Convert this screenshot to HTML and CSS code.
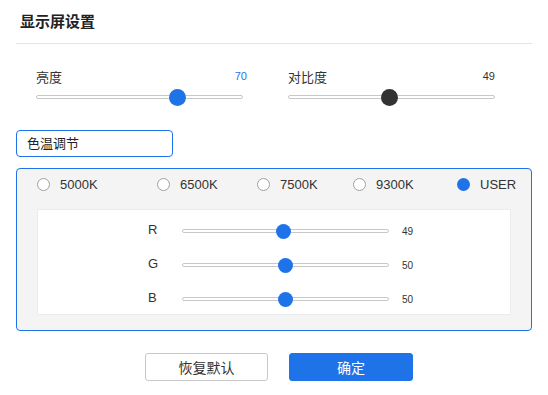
FILE: index.html
```html
<!DOCTYPE html>
<html lang="zh-CN">
<head>
    <meta charset="UTF-8">
    <meta name="viewport" content="width=device-width, initial-scale=1.0">
    <title>显示屏设置</title>
    <link rel="stylesheet" href="styles.css">
</head>
<body>
    <div class="page">
        <div class="header">
            <h1>显示屏设置</h1>
        </div>

        <div class="sliders">
            <div class="slider-block">
                <div class="slider-head">
                    <span>亮度</span>
                    <span class="slider-value slider-value-wide">70</span>
                </div>
                <input type="range" class="slider" min="0" max="100" value="70">
            </div>
            <div class="slider-block">
                <div class="slider-head">
                    <span>对比度</span>
                    <span class="slider-value slider-value-dark">49</span>
                </div>
                <input type="range" class="slider slider-dark" min="0" max="100" value="49">
            </div>
        </div>

        <div class="section-title">色温调节</div>

        <div class="panel">
            <div class="radios">
                <label class="radio"><span class="radio-dot"></span>5000K</label>
                <label class="radio"><span class="radio-dot"></span>6500K</label>
                <label class="radio"><span class="radio-dot"></span>7500K</label>
                <label class="radio"><span class="radio-dot"></span>9300K</label>
                <label class="radio"><span class="radio-dot checked"></span>USER</label>
            </div>
            <div class="rgb-box">
                <div class="rgb-row">
                    <span class="rgb-label">R</span>
                    <input type="range" class="slider slider-sm" min="0" max="100" value="49">
                    <span class="rgb-value">49</span>
                </div>
                <div class="rgb-row">
                    <span class="rgb-label">G</span>
                    <input type="range" class="slider slider-sm" min="0" max="100" value="50">
                    <span class="rgb-value">50</span>
                </div>
                <div class="rgb-row">
                    <span class="rgb-label">B</span>
                    <input type="range" class="slider slider-sm" min="0" max="100" value="50">
                    <span class="rgb-value">50</span>
                </div>
            </div>
        </div>

        <div class="actions">
            <button class="btn">恢复默认</button>
            <button class="btn btn-primary">确定</button>
        </div>
    </div>
</body>
</html>
```

FILE: styles.css
```css
body {
    margin: 0;
    font-family: "Liberation Sans", "Noto Sans CJK SC", sans-serif;
    color: #333;
    background-color: #fff;
}
.page {
    padding: 0 16px;
    width: 516px;
}
.header {
    height: 43px;
    border-bottom: 1px solid #e5e5e5;
}
h1 {
    margin: 0;
    padding: 1px 0 0 4px;
    font-size: 15px;
    line-height: 42px;
    font-weight: bold;
    color: #222;
}
.sliders {
    display: flex;
    gap: 45px;
    padding: 24px 0 0 20px;
}
.slider-block {
    width: 207px;
}
.slider-head {
    display: flex;
    justify-content: space-between;
    align-items: center;
    height: 16px;
    font-size: 13px;
}
.slider-value {
    font-size: 11px;
    color: #1e73e8;
}
.slider-value-wide {
    margin-right: -4px;
}
.slider-value-dark {
    color: #333;
}
.slider {
    -webkit-appearance: none;
    appearance: none;
    display: block;
    width: 207px;
    height: 17px;
    margin: 4px 0 0;
    background: transparent;
}
.slider::-webkit-slider-runnable-track {
    height: 4px;
    border: 1px solid #c8c8c8;
    border-radius: 3px;
    background: #fff;
}
.slider::-webkit-slider-thumb {
    -webkit-appearance: none;
    width: 17px;
    height: 17px;
    margin-top: -7px;
    border-radius: 50%;
    background: #1e73e8;
    border: none;
}
.slider-dark::-webkit-slider-thumb {
    background: #333;
}
.slider-sm {
    height: 15px;
    margin: 0;
}
.slider-sm::-webkit-slider-thumb {
    width: 15px;
    height: 15px;
    margin-top: -6px;
}
.section-title {
    margin-top: 25px;
    height: 25px;
    line-height: 25px;
    padding-left: 10px;
    width: 145px;
    border: 1px solid #1e73e8;
    border-radius: 4px;
    font-size: 13px;
    color: #222;
}
.panel {
    margin-top: 11px;
    padding: 7px 20px 15px;
    border: 1px solid #1e73e8;
    border-radius: 4px;
    background-color: #f4f4f4;
}
.radios {
    display: grid;
    grid-template-columns: 120px 100px 96px 104px auto;
    height: 16px;
    align-items: center;
}
.radio {
    display: flex;
    align-items: center;
    gap: 10px;
    font-size: 13px;
    color: #333;
}
.radio-dot {
    width: 11px;
    height: 11px;
    border: 1px solid #a0a0a0;
    border-radius: 50%;
    background: #fff;
}
.radio-dot.checked {
    width: 13px;
    height: 13px;
    border: none;
    background: #1e73e8;
}
.rgb-box {
    margin-top: 17px;
    height: 106px;
    box-sizing: border-box;
    padding-top: 4px;
    border: 1px solid #ececec;
    background: #fff;
}
.rgb-row {
    display: flex;
    align-items: center;
    height: 34px;
    padding-left: 110px;
}
.rgb-label {
    width: 34px;
    font-size: 13px;
    margin-top: -3px;
}
.rgb-value {
    margin-left: 13px;
    font-size: 10px;
}
.actions {
    display: flex;
    justify-content: center;
    gap: 21px;
    margin-top: 22px;
    padding-left: 10px;
}
.btn {
    width: 123px;
    height: 28px;
    font-family: "Liberation Sans", "Noto Sans CJK SC", sans-serif;
    font-size: 14px;
    color: #333;
    background: #fff;
    border: 1px solid #c8c8c8;
    border-radius: 3px;
    cursor: pointer;
}
.btn-primary {
    width: 124px;
    color: #fff;
    background: #1e73e8;
    border-color: #1e73e8;
}
```
